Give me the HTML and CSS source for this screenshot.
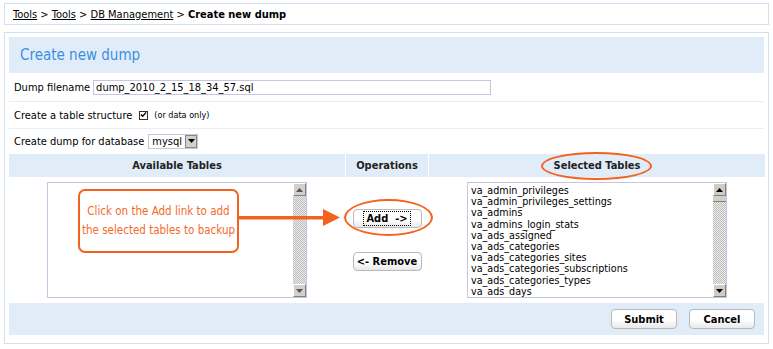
FILE: index.html
```html
<!DOCTYPE html>
<html lang="en">
<head>
    <meta charset="UTF-8">
    <title>Create new dump</title>
    <link rel="stylesheet" href="styles.css">
</head>
<body>
<div class="page">
    <!-- breadcrumb -->
    <div class="breadcrumb">
        <a href="#">Tools</a> &gt; <a href="#">Tools</a> &gt; <a href="#">DB Management</a> &gt; <b>Create new dump</b>
    </div>

    <div class="panel">
        <div class="panel-title">Create new dump</div>

        <div class="form-row row-file">
            Dump filename <input class="text-input" type="text" value="dump_2010_2_15_18_34_57.sql">
        </div>
        <div class="form-row row-check">
            Create a table structure
            <span class="checkbox"><svg width="8" height="8" viewBox="0 0 8 8"><path d="M1 3.5 L3 5.5 L7 1" fill="none" stroke="#000" stroke-width="1.6"/></svg></span>
            <span class="note">(or data only)</span>
        </div>
        <div class="form-row row-db">
            Create dump for database
            <span class="select">mysql<span class="select-btn"><svg width="7" height="4" viewBox="0 0 7 4"><path d="M0 0 H7 L3.5 4 Z" fill="#000"/></svg></span></span>
        </div>

        <div class="tables">
            <div class="th">Available Tables</div>
            <div class="th">Operations</div>
            <div class="th">Selected Tables</div>

            <div class="td">
                <div class="listbox">
                    <div class="list-items"></div>
                    <div class="scrollbar">
                        <span class="sb-btn"><svg width="7" height="4" viewBox="0 0 7 4"><path d="M0 4 H7 L3.5 0 Z" fill="#555"/></svg></span>
                        <span class="sb-track"></span>
                        <span class="sb-btn"><svg width="7" height="4" viewBox="0 0 7 4"><path d="M0 0 H7 L3.5 4 Z" fill="#555"/></svg></span>
                    </div>
                </div>
            </div>
            <div class="td ops">
                <button class="btn btn-op"><span class="focus">Add&nbsp; -&gt;</span></button>
                <button class="btn btn-op">&lt;- Remove</button>
            </div>
            <div class="td">
                <div class="listbox">
                    <div class="list-items">
                        <div>va_admin_privileges</div>
                        <div>va_admin_privileges_settings</div>
                        <div>va_admins</div>
                        <div>va_admins_login_stats</div>
                        <div>va_ads_assigned</div>
                        <div>va_ads_categories</div>
                        <div>va_ads_categories_sites</div>
                        <div>va_ads_categories_subscriptions</div>
                        <div>va_ads_categories_types</div>
                        <div>va_ads_days</div>
                    </div>
                    <div class="scrollbar">
                        <span class="sb-btn dark"><svg width="7" height="4" viewBox="0 0 7 4"><path d="M0 4 H7 L3.5 0 Z" fill="#000"/></svg></span>
                        <span class="sb-thumb"></span>
                        <span class="sb-track"></span>
                        <span class="sb-btn dark"><svg width="7" height="4" viewBox="0 0 7 4"><path d="M0 0 H7 L3.5 4 Z" fill="#000"/></svg></span>
                    </div>
                </div>
            </div>
        </div>

        <div class="panel-footer">
            <button class="btn">Submit</button>
            <button class="btn">Cancel</button>
        </div>
    </div>

    <!-- annotations drawn over the form -->
    <div class="callout">Click on the Add link to add<br>the selected tables to backup</div>
    <svg class="arrow" width="104" height="22" viewBox="0 0 104 22">
        <rect x="0" y="9" width="88" height="3.5" fill="#f4621f"/>
        <path d="M85 2 L102 10.5 L85 19 Z" fill="#f4621f"/>
    </svg>
    <div class="ring ring-add"></div>
    <div class="ring ring-selected"></div>
</div>
</body>
</html>
```

FILE: styles.css
```css
body {
    margin: 0;
    font-family: "DejaVu Sans Condensed", "DejaVu Sans", sans-serif;
    font-stretch: condensed;
    font-size: 11px;
    color: #000;
    background-color: #fff;
}
.page {
    position: relative;
    padding: 3px 4px;
    width: 765px;
}

.breadcrumb {
    border: 1px solid #cfe1f0;
    height: 20px;
    line-height: 22px;
    padding-left: 8px;
    font-size: 11px;
}
.breadcrumb a {
    color: #000;
}

.panel {
    margin-top: 7px;
    border: 1px solid #cfe1f0;
    padding: 4px 4px 8px 4px;
}
.panel-title {
    height: 36px;
    line-height: 36px;
    background-color: #e0edf8;
    color: #3c8ee4;
    font-size: 15px;
    padding-left: 11px;
}

.form-row {
    display: flex;
    align-items: center;
    padding-left: 5px;
    border-bottom: 1px solid #e6eff8;
}
.row-file {
    height: 28px;
}
.row-check {
    height: 26px;
}
.row-db {
    height: 24px;
    border-bottom: none;
}
.text-input {
    margin: 0 0 0 3px;
    width: 398px;
    height: 15px;
    box-sizing: border-box;
    border: 1px solid #c6c5e0;
    padding: 0 2px;
    font-family: inherit;
    font-stretch: condensed;
    font-size: 11px;
}
.checkbox {
    display: inline-flex;
    align-items: center;
    justify-content: center;
    width: 9px;
    height: 9px;
    border: 1px solid #333;
    margin: 0 6px 0 7px;
    box-sizing: border-box;
}
.note {
    font-size: 9px;
}
.select {
    display: inline-flex;
    align-items: center;
    justify-content: space-between;
    margin-left: 4px;
    width: 50px;
    height: 15px;
    box-sizing: border-box;
    border: 1px solid #c6c5e0;
    padding-left: 3px;
}
.select-btn {
    display: inline-flex;
    align-items: center;
    justify-content: center;
    width: 12px;
    height: 13px;
    background-color: #d4d0c8;
    border: 1px solid #888;
    box-sizing: border-box;
}

.tables {
    display: grid;
    grid-template-columns: 336px 82px 336px;
    column-gap: 1px;
    margin-top: 1px;
}
.th {
    background-color: #e0edf8;
    height: 23px;
    line-height: 23px;
    text-align: center;
    font-weight: bold;
    color: #222;
}
.td {
    display: flex;
    justify-content: center;
    padding: 5px 0 4px 0;
}
.ops {
    flex-direction: column;
    align-items: center;
    justify-content: flex-start;
    padding-top: 32px;
    gap: 24px;
}

.listbox {
    display: flex;
    width: 260px;
    height: 116px;
    box-sizing: border-box;
    border: 1px solid #c6c5e0;
}
.list-items {
    flex: 1;
    padding: 2px 3px;
    line-height: 11.2px;
    font-family: "DejaVu Sans", sans-serif;
    font-stretch: normal;
    font-size: 9.6px;
    white-space: nowrap;
    overflow: hidden;
}
.scrollbar {
    display: flex;
    flex-direction: column;
    width: 13px;
}
.sb-btn {
    display: flex;
    align-items: center;
    justify-content: center;
    height: 13px;
    background-color: #d4d0c8;
    border: 1px solid #fff;
    border-right-color: #808080;
    border-bottom-color: #808080;
    box-sizing: border-box;
}
.sb-btn.dark {
    background-color: #cfccc4;
}
.sb-thumb {
    height: 5px;
    background-color: #d4d0c8;
    border-bottom: 1px solid #808080;
}
.sb-track {
    flex: 1;
    background: repeating-conic-gradient(#bdbdbd 0 25%, #ececec 0 50%) 0 0 / 2px 2px;
}

.btn {
    font-family: inherit;
    font-stretch: condensed;
    font-size: 11px;
    font-weight: bold;
    color: #000;
    background: linear-gradient(#ffffff, #ffffff 55%, #e8e8e8);
    border: 1px solid #b9b9b9;
    border-radius: 4px;
    height: 20px;
    padding: 0;
    white-space: nowrap;
    cursor: pointer;
}
.btn-op {
    width: 69px;
    height: 19px;
}
.focus {
    border: 1px dotted #000;
    padding: 0 2px;
}

.panel-footer {
    display: flex;
    justify-content: flex-end;
    align-items: center;
    gap: 12px;
    height: 32px;
    margin-top: 1px;
    padding-right: 9px;
    background-color: #e0edf8;
}
.panel-footer .btn {
    width: 66px;
}

/* annotations */
.callout {
    position: absolute;
    left: 78px;
    top: 189px;
    width: 161px;
    height: 64px;
    box-sizing: border-box;
    border: 2px solid #f4621f;
    border-radius: 7px;
    background-color: #fff;
    color: #f26b2a;
    font-size: 11.5px;
    line-height: 19px;
    text-align: center;
    display: flex;
    align-items: center;
    justify-content: center;
    white-space: nowrap;
}
.arrow {
    position: absolute;
    left: 238px;
    top: 207px;
}
.ring {
    position: absolute;
    border: 2px solid #f4621f;
    border-radius: 50%;
    box-sizing: border-box;
}
.ring-add {
    left: 344px;
    top: 199px;
    width: 89px;
    height: 37px;
}
.ring-selected {
    left: 541px;
    top: 152px;
    width: 111px;
    height: 28px;
}
```
